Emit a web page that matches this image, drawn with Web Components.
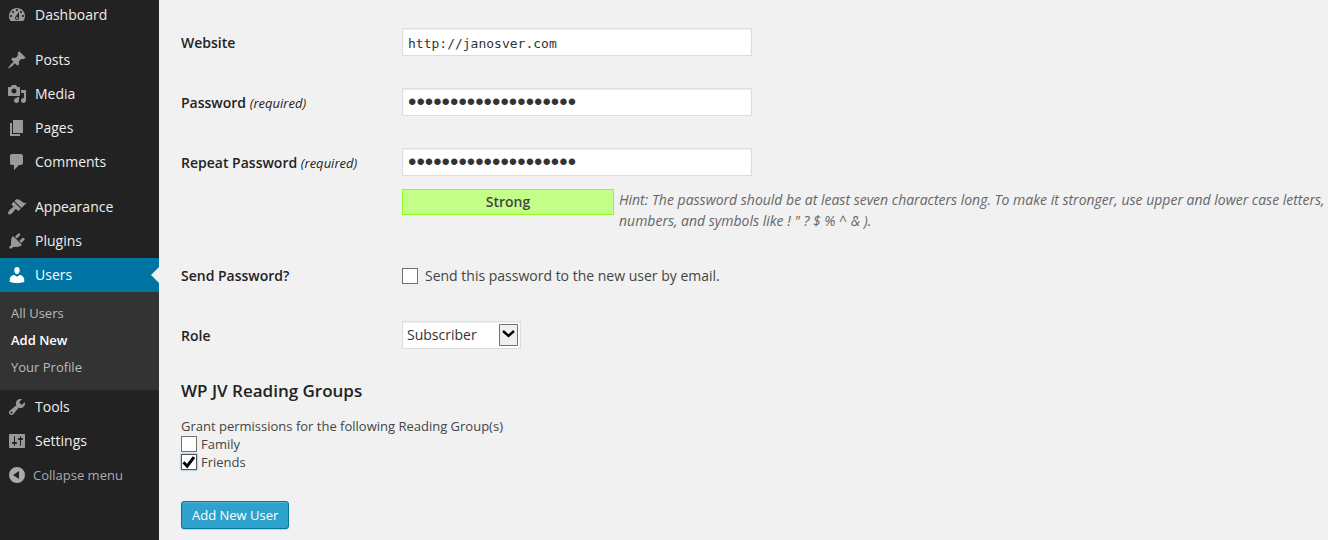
<!DOCTYPE html>
<html lang="en">
<head>
<meta charset="utf-8">
<title>Add New User</title>
<style>
  html, body { margin: 0; min-height: 100%; background: #f1f1f1; }
  body { font: 14px/20px "Open Sans", sans-serif; color: #444; overflow-x: hidden; }
</style>
</head>
<body>
<admin-shell>
  <admin-menu slot="menu">
    <menu-item icon="dashboard">Dashboard</menu-item>
    <menu-item icon="post" first>Posts</menu-item>
    <menu-item icon="media">Media</menu-item>
    <menu-item icon="page">Pages</menu-item>
    <menu-item icon="comments">Comments</menu-item>
    <menu-item icon="appearance" first>Appearance</menu-item>
    <menu-item icon="plugins">Plugins</menu-item>
    <menu-item icon="users" current>Users</menu-item>
    <sub-menu>
      <sub-item>All Users</sub-item>
      <sub-item current>Add New</sub-item>
      <sub-item>Your Profile</sub-item>
    </sub-menu>
    <menu-item icon="tools">Tools</menu-item>
    <menu-item icon="settings">Settings</menu-item>
    <collapse-button>Collapse menu</collapse-button>
  </admin-menu>
  <user-form></user-form>
</admin-shell>

<script>
const ICONS = {
  dashboard: 'M3.76 16h12.48c1.1-1.37 1.76-3.11 1.76-5 0-4.42-3.58-8-8-8s-8 3.58-8 8c0 1.89.66 3.63 1.76 5zM10 4c.55 0 1 .45 1 1s-.45 1-1 1-1-.45-1-1 .45-1 1-1zM6 6c.55 0 1 .45 1 1s-.45 1-1 1-1-.45-1-1 .45-1 1-1zm8 0c.55 0 1 .45 1 1s-.45 1-1 1-1-.45-1-1 .45-1 1-1zm-5.37 5.55L12 7v6c0 1.1-.9 2-2 2s-2-.9-2-2c0-.57.24-1.08.63-1.45zM4 10c.55 0 1 .45 1 1s-.45 1-1 1-1-.45-1-1 .45-1 1-1zm12 0c.55 0 1 .45 1 1s-.45 1-1 1-1-.45-1-1 .45-1 1-1zm-5 3c0-.55-.45-1-1-1s-1 .45-1 1 .45 1 1 1 1-.45 1-1z',
  post: 'M10.44 3.02l1.82-1.82 6.36 6.35-1.83 1.82c-1.05-.68-2.48-.57-3.41.36l-.75.75c-.92.93-1.04 2.35-.35 3.41l-1.83 1.82-2.41-2.41-2.8 2.79c-.42.42-3.38 2.71-3.8 2.29s1.86-3.39 2.28-3.81l2.79-2.79L4.1 9.36l1.83-1.82c1.05.69 2.48.57 3.4-.36l.75-.75c.93-.92 1.05-2.35.36-3.41z',
  media: 'M13 11V4c0-.55-.45-1-1-1h-1.67L9 1H5L3.67 3H2c-.55 0-1 .45-1 1v7c0 .55.45 1 1 1h10c.55 0 1-.45 1-1zM7 4.5c1.38 0 2.5 1.12 2.5 2.5S8.38 9.5 7 9.5 4.5 8.38 4.5 7 5.62 4.5 7 4.5zM14 6h5v10.5c0 1.38-1.12 2.5-2.5 2.5S14 17.88 14 16.5s1.12-2.5 2.5-2.5c.17 0 .34.02.5.05V9h-3V6zm-4 8.05V13h2v3.5c0 1.38-1.12 2.5-2.5 2.5S7 17.88 7 16.5 8.12 14 9.5 14c.17 0 .34.02.5.05z',
  page: 'M6 15V2h10v13H6zm-1 1h8v2H3V5h2v11z',
  comments: 'M5 2h9c1.1 0 2 .9 2 2v7c0 1.1-.9 2-2 2h-2l-5 5v-5H5c-1.1 0-2-.9-2-2V4c0-1.1.9-2 2-2z',
  appearance: 'M14.48 11.06L7.41 3.99l1.5-1.5c.5-.56 2.3-.47 3.51.32 1.21.8 1.43 1.28 2.91 2.1 1.18.64 2.45 1.26 4.45.85zm-.71.71L6.7 4.7 4.93 6.47c-.39.39-.39 1.02 0 1.41l1.06 1.06c.39.39.39 1.03 0 1.42-.6.6-1.43 1.11-2.21 1.69-.35.26-.7.53-1.01.84C1.43 14.23.4 16.08 1.4 17.07c.99 1 2.84-.03 4.18-1.36.31-.31.58-.66.85-1.02.57-.78 1.08-1.61 1.69-2.21.39-.39 1.02-.39 1.41 0l1.06 1.06c.39.39 1.02.39 1.41 0z',
  plugins: 'M13.11 4.36L9.87 7.6 8 5.73l3.24-3.24c.35-.34 1.05-.2 1.56.32.52.51.66 1.21.31 1.55zm-8 1.77l.91-1.12 9.01 9.01-1.19.84c-.71.71-2.63 1.16-3.82 1.16H6.14L4.9 17.26c-.59.59-1.54.59-2.12 0-.59-.58-.59-1.53 0-2.12l1.24-1.24v-3.88c0-1.13.4-3.19 1.09-3.89zm7.26 3.97l3.24-3.24c.34-.35 1.04-.21 1.55.31.52.51.66 1.21.31 1.55l-3.24 3.25z',
  users: 'M10 9.25c-2.27 0-2.73-3.44-2.73-3.44C7 4.02 7.82 2 9.97 2c2.16 0 2.98 2.02 2.71 3.81 0 0-.41 3.44-2.68 3.44zM7.28 10L10 11.82 12.72 10c2.39 0 4.52 2.33 4.52 4.53v2.49s-3.65 1.13-7.24 1.13c-3.65 0-7.24-1.13-7.24-1.13v-2.49c0-2.25 1.94-4.53 4.52-4.53z',
  tools: 'M16.68 9.77c-1.34 1.34-3.3 1.67-4.95.99l-5.41 6.52c-.99.99-2.59.99-3.58 0s-.99-2.59 0-3.57l6.52-5.42c-.68-1.65-.35-3.61.99-4.95 1.28-1.28 3.12-1.62 4.72-1.06l-2.89 2.89 2.82 2.82 2.86-2.87c.53 1.58.18 3.39-1.08 4.65zM3.81 16.21c.4.39 1.04.39 1.43 0 .4-.4.4-1.04 0-1.43-.39-.4-1.03-.4-1.43 0-.39.39-.39 1.03 0 1.43z',
  settings: 'M18 16V4c0-.55-.45-1-1-1H3c-.55 0-1 .45-1 1v12c0 .55.45 1 1 1h14c.55 0 1-.45 1-1zM8 11h1c.55 0 1 .45 1 1s-.45 1-1 1H8v1.5c0 .28-.22.5-.5.5s-.5-.22-.5-.5V13H6c-.55 0-1-.45-1-1s.45-1 1-1h1V5.5c0-.28.22-.5.5-.5s.5.22.5.5V11zm5-2h-1c-.55 0-1-.45-1-1s.45-1 1-1h1V5.5c0-.28.22-.5.5-.5s.5.22.5.5V7h1c.55 0 1 .45 1 1s-.45 1-1 1h-1v5.5c0 .28-.22.5-.5.5s-.5-.22-.5-.5V9z',
  collapse: 'M10 2a8 8 0 1 0 0 16 8 8 0 0 0 0-16zM12 6v8l-6-4z'
};
const svg = name => `<svg viewBox="0 0 20 20" width="20" height="20" fill="currentColor" fill-rule="evenodd" aria-hidden="true"><path d="${ICONS[name]}"/></svg>`;

function define(tag, render) {
  customElements.define(tag, class extends HTMLElement {
    connectedCallback() {
      if (!this.shadowRoot) this.attachShadow({ mode: 'open' }).innerHTML = render(this);
    }
  });
}

define('admin-shell', () => `
  <style>
    :host { display: grid; grid-template-columns: 159px minmax(0, 1fr); min-height: 100vh; }
    aside { background: #222; }
    main { padding: 28px 0 11px 22px; }
  </style>
  <aside><slot name="menu"></slot></aside>
  <main><slot></slot></main>`);

define('admin-menu', () => `
  <style>
    :host { display: block; }
    /* The list sits slightly above the top edge, as scrolled. */
    nav { display: flex; flex-direction: column; margin-top: -2px; }
  </style>
  <nav aria-label="Main menu"><slot></slot></nav>`);

define('menu-item', el => `
  <style>
    :host { display: block; }
    :host([first]) { margin-top: 11px; }
    a { display: flex; align-items: center; gap: 8px; height: 34px; padding-left: 7px; color: #eee; text-decoration: none; }
    svg { color: #999; }
    :host([current]) a { position: relative; background: #0074a2; color: #fff; }
    :host([current]) svg { color: #fff; }
    :host([current]) a::after { content: ""; position: absolute; right: 0; top: 9px; border: 8px solid transparent; border-left: 0; border-right-color: #f1f1f1; }
  </style>
  <a href="#">${svg(el.getAttribute('icon'))}<span><slot></slot></span></a>`);

define('sub-menu', () => `
  <style>
    :host { display: flex; flex-direction: column; gap: 9px; padding: 12px 11px 14px; background: #333; }
  </style>
  <slot></slot>`);

define('sub-item', () => `
  <style>
    :host { display: block; font-size: 13px; line-height: 18px; }
    a { display: block; color: #bbb; text-decoration: none; }
    :host([current]) a { color: #fff; font-weight: 600; }
  </style>
  <a href="#"><slot></slot></a>`);

define('collapse-button', () => `
  <style>
    :host { display: block; }
    button { display: flex; align-items: center; gap: 6px; width: 100%; height: 34px; padding: 0 0 0 7px; border: 0; background: none; color: #aaa; font: 13px/18px "Open Sans", sans-serif; }
  </style>
  <button type="button">${svg('collapse')}<span><slot></slot></span></button>`);

define('form-row', () => `
  <style>
    :host { display: grid; grid-template-columns: 221px minmax(0, 1fr); align-items: start; }
    .label { display: flex; align-items: center; box-sizing: border-box; min-height: 28px; padding-top: 2px; color: #222; font-weight: 600; }
    .field { display: flex; align-items: center; min-height: 26px; }
    :host([compact]) .label { min-height: 26px; padding-top: 0; }
  </style>
  <div class="label"><slot name="label"></slot></div>
  <div><div class="field"><slot></slot></div><slot name="after"></slot></div>`);

define('check-field', el => `
  <style>
    :host { display: block; }
    label { display: flex; align-items: center; gap: 4px; }
    :host([wide]) label { gap: 7px; }
    .box { display: grid; width: 16px; height: 16px; }
    .box > * { grid-area: 1 / 1; }
    input { appearance: none; width: 16px; height: 16px; margin: 0; border: 1px solid #707070; background: #fff; }
    input:checked { border-color: #555; box-shadow: 0 0 2px #5b9dd9; }
    svg { visibility: hidden; pointer-events: none; z-index: 1; }
    input:checked + svg { visibility: visible; }
  </style>
  <label><span class="box"><input type="checkbox" ${el.hasAttribute('checked') ? 'checked' : ''}><svg viewBox="0 0 16 16" width="16" height="16" aria-hidden="true"><path d="M2.5 8.2l3.7 4L13 3.2" fill="none" stroke="#000" stroke-width="3"/></svg></span><span><slot></slot></span></label>`);

define('strength-meter', () => `
  <style>
    :host { display: flex; align-items: flex-start; gap: 5px; margin-top: 13px; }
    .result { flex: none; box-sizing: border-box; width: 212px; height: 26px; border: 1px solid #8dff1c; background: #c3ff88; text-align: center; line-height: 24px; font-weight: 600; }
    p { margin: 0; color: #666; font-style: italic; line-height: 21px; }
  </style>
  <div class="result" role="status"><slot></slot></div>
  <p><slot name="hint"></slot></p>`);

define('role-select', () => `
  <style>
    :host { display: block; }
    .box { display: grid; align-items: center; justify-items: end; width: 119px; }
    .box > * { grid-area: 1 / 1; }
    select { appearance: none; box-sizing: border-box; width: 100%; height: 28px; margin: 0; padding: 0 24px 0 4px; border: 1px solid #ddd; border-radius: 0; background: #fff; color: #333; font: 14px/20px "Open Sans", sans-serif; box-shadow: inset 0 1px 2px rgba(0,0,0,.07); }
    svg { margin-right: 3px; pointer-events: none; }
  </style>
  <span class="box"><select aria-label="Role"><option>Subscriber</option><option>Contributor</option><option>Author</option><option>Editor</option><option>Administrator</option></select>
  <svg viewBox="0 0 19 22" width="19" height="22" aria-hidden="true"><path d="M.5.5h18v21H.5z" fill="#f0f0f0" stroke="#707070"/><path d="M4 7l5.500 5L15 7" fill="none" stroke="#000" stroke-width="2.4"/></svg></span>`);

define('primary-button', () => `
  <style>
    :host { display: block; }
    button { height: 28px; padding: 0 10px 1px; border: 1px solid #0074a2; border-radius: 3px; background: #2ea2cc; box-shadow: inset 0 1px 0 rgba(120,200,230,.5), 0 1px 0 rgba(0,0,0,.15); color: #fff; font: 13px/24px "Open Sans", sans-serif; }
  </style>
  <button type="submit"><slot></slot></button>`);

define('user-form', () => `
  <style>
    :host { display: block; }
    .rows { display: flex; flex-direction: column; gap: 32px; }
    em { font-size: 13px; font-weight: 500; }
    input { box-sizing: border-box; width: 350px; max-width: 100%; height: 28px; margin: 0; padding: 4px 5px 2px; border: 1px solid #ddd; background: #fff; color: #333; font: 13px/20px "DejaVu Sans Mono", monospace; box-shadow: inset 0 1px 2px rgba(0,0,0,.07); }
    input[type=password] { padding: 0 5px; font: 24px/24px "Liberation Sans", sans-serif; }
    h3 { margin: 30px 0 14px; color: #222; font-size: 17px; line-height: 24px; font-weight: 600; }
    .groups { font-size: 13px; line-height: 18px; }
    fieldset { margin: 0; padding: 0; border: 0; }
    legend { padding: 0; }
    primary-button { margin-top: 30px; }
  </style>
  <form onsubmit="return false">
    <div class="rows">
      <form-row><label slot="label" for="url">Website</label><input id="url" type="url" value="http://janosver.com"></form-row>
      <form-row><label slot="label" for="pass1">Password <em>(required)</em></label><input id="pass1" type="password" value="aaaaaaaaaaaaaaaaaaaa"></form-row>
      <form-row>
        <label slot="label" for="pass2">Repeat Password <em>(required)</em></label><input id="pass2" type="password" value="aaaaaaaaaaaaaaaaaaaa">
        <strength-meter slot="after">Strong<span slot="hint">Hint: The password should be at least seven characters long. To make it stronger, use upper and lower case letters, numbers, and symbols like ! " ? $ % ^ &amp; ).</span></strength-meter>
      </form-row>
      <form-row compact><span slot="label">Send Password?</span><check-field wide>Send this password to the new user by email.</check-field></form-row>
      <form-row><span slot="label">Role</span><role-select></role-select></form-row>
    </div>
    <h3>WP JV Reading Groups</h3>
    <fieldset class="groups">
      <legend>Grant permissions for the following Reading Group(s)</legend>
      <check-field>Family</check-field>
      <check-field checked>Friends</check-field>
    </fieldset>
    <primary-button>Add New User</primary-button>
  </form>`);
</script>
</body>
</html>
